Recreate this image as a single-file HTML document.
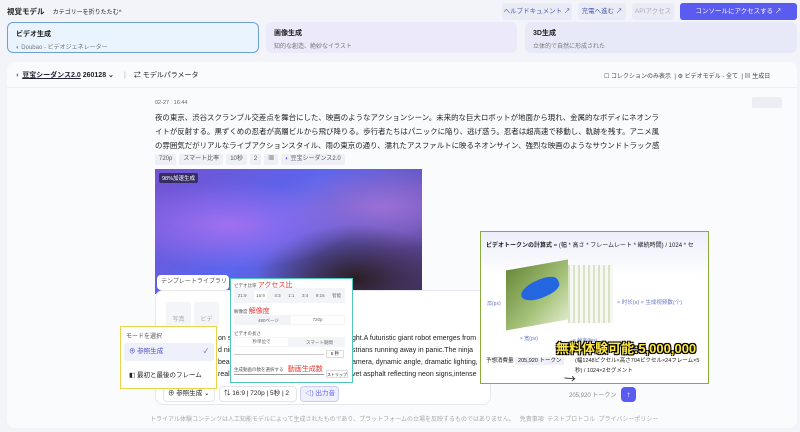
<!DOCTYPE html>
<html><head><meta charset="utf-8"><style>
*{box-sizing:border-box;margin:0;padding:0}
body{width:800px;height:432px;overflow:hidden;background:#f3f4f9;font-family:"Liberation Sans","Noto Sans CJK JP",sans-serif;color:#222;position:relative;font-size:7px}
.a{position:absolute;white-space:nowrap}
.btn{position:absolute;top:3px;height:17px;border-radius:3px;background:#e9ebf5;color:#4b5bb0;font-size:6.5px;line-height:17px;text-align:center}
.card{position:absolute;top:22px;height:31px;border-radius:6px;padding:6px 8px;font-size:7px;font-weight:bold;color:#222}
.card span{display:block;font-weight:normal;font-size:6px;color:#777;margin-top:3px}
.tag{display:inline-block;background:#eef0f5;color:#555;font-size:6px;padding:0 4px;height:11px;line-height:11px;margin-right:3px;border-radius:2px}
.txt{font-size:7.45px;line-height:14px;color:#222;white-space:normal}
.en{font-size:7px;color:#222}
</style></head><body>
<div class="a" style="left:7px;top:6px;font-size:7.5px;font-weight:bold">視覚モデル <span style="font-weight:normal;font-size:6px;margin-left:6px">カテゴリーを折りたたむ^</span></div>
<div class="btn" style="left:502px;width:70px">ヘルプドキュメント ↗</div>
<div class="btn" style="left:578px;width:48px">充電へ進む ↗</div>
<div class="btn" style="left:632px;width:42px;color:#aab">APIアクセス</div>
<div class="btn" style="left:680px;width:117px;background:#5a5bf0;color:#fff">コンソールにアクセスする ↗</div>
<div class="card" style="left:7px;width:252px;background:#eaf4fe;border:1px solid #6b9fd6">ビデオ生成<span><b style="color:#4a7cf0">◐</b> Doubao - ビデオジェネレーター</span></div>
<div class="card" style="left:266px;width:251px;background:#ebe9fa">画像生成<span>知的な創造、絶妙なイラスト</span></div>
<div class="card" style="left:525px;width:272px;background:#e7e9f9">3D生成<span>立体的で自然に形成された</span></div>
<div class="a" style="left:7px;top:62px;width:790px;height:366px;background:#fafbfd;border-radius:8px"></div>
<div class="a" style="left:16px;top:70px;font-size:7px;font-weight:bold"><span style="color:#6b5ff0">◐</span> <u style="color:#223">豆宝シーダンス2.0</u> 260128 ⌄ <span style="color:#ccc;margin:0 8px">|</span><span style="font-weight:normal">⇄ モデルパラメータ</span></div>
<div class="a" style="left:604px;top:71px;font-size:6px;color:#444">☐ コレクションのみ表示 &nbsp;| ⚙ ビデオモデル - 全て &nbsp;| ▤ 生成日</div>
<div class="a" style="left:7px;top:87px;width:790px;height:1px;background:#eceef3"></div>
<div class="a" style="left:752px;top:97px;width:30px;height:11px;background:#eceef3;border-radius:2px"></div>
<div class="a" style="left:155px;top:100px;font-size:5.5px;color:#666">02-27 &nbsp; 16:44</div>
<div class="a" style="left:155px;top:111px;font-size:7.45px;line-height:14px">夜の東京、渋谷スクランブル交差点を舞台にした、映画のようなアクションシーン。未来的な巨大ロボットが地面から現れ、金属的なボディにネオンラ<br>イトが反射する。黒ずくめの忍者が高層ビルから飛び降りる。歩行者たちはパニックに陥り、逃げ惑う。忍者は超高速で移動し、軌跡を残す。アニメ風<br>の雰囲気だがリアルなライブアクションスタイル、雨の東京の通り、濡れたアスファルトに映るネオンサイン、強烈な映画のようなサウンドトラック感</div>
<div class="a" style="left:155px;top:154px"><span class="tag">720p</span><span class="tag">スマート比率</span><span class="tag">10秒</span><span class="tag">2</span><span class="tag">▦</span><span class="tag"><b style="color:#6b5ff0">◐</b> 豆宝シーダンス2.0</span></div>
<div class="a" style="left:155px;top:169px;width:267px;height:125px;background:radial-gradient(ellipse at 28% 45%,#a070f0 0,transparent 45%),radial-gradient(ellipse at 75% 88%,#2a1e22 0,transparent 35%),radial-gradient(ellipse at 85% 30%,#9a70d6 0,transparent 35%),linear-gradient(135deg,#7452d0,#5a66ee 45%,#6450b0 80%,#4a3a78)"></div>
<div class="a" style="left:159px;top:173px;background:rgba(30,30,50,.7);color:#fff;font-size:5.5px;padding:1px 3px;border-radius:2px">98%加速生成</div>
<div class="a" style="left:155px;top:290px;width:336px;height:115px;background:#fff;border:1px solid #e6e8ee;border-radius:8px"></div>
<div class="a" style="left:157px;top:275px;width:72px;height:15px;background:#fff;border-radius:4px;font-size:6px;color:#555;line-height:15px;padding-left:4px">テンプレートライブラリ</div>
<div class="a" style="left:166px;top:302px;width:25px;height:26px;background:#f4f5f8;border-radius:3px;font-size:6px;color:#aaa;text-align:center;padding-top:12px">写真</div>
<div class="a" style="left:194px;top:302px;width:25px;height:26px;background:#f4f5f8;border-radius:3px;font-size:6px;color:#aaa;text-align:center;padding-top:12px">ビデ</div>
<div class="a en" style="left:218px;top:335px">on sc</div><div class="a en" style="left:352px;top:335px">ght.A futuristic giant robot emerges from</div>
<div class="a en" style="left:218px;top:347px">d nin</div><div class="a en" style="left:352px;top:347px">strians running away in panic.The ninja</div>
<div class="a en" style="left:218px;top:359px">bean</div><div class="a en" style="left:352px;top:359px">amera, dynamic angle, dramatic lighting,</div>
<div class="a en" style="left:218px;top:371px">realis</div><div class="a en" style="left:352px;top:371px">vet asphalt reflecting neon signs,intense</div>
<div class="a" style="left:163px;top:386px;width:52px;height:16px;border:1px solid #e3e5ea;border-radius:4px;font-size:6.5px;line-height:14px;padding-left:4px">⊕ 参照生成 ⌄</div>
<div class="a" style="left:219px;top:386px;width:78px;height:16px;border:1px solid #e3e5ea;border-radius:4px;font-size:6.5px;line-height:14px;padding-left:4px">⇅ 16:9 | 720p | 5秒 | 2</div>
<div class="a" style="left:300px;top:386px;width:39px;height:16px;border:1px solid #c9cdf5;background:#eef0fd;color:#5a5bf0;border-radius:4px;font-size:6.5px;line-height:14px;padding-left:4px">◁) 出力音</div>
<div class="a" style="left:569px;top:390px;font-size:6px;color:#888">205,920 トークン</div>
<div class="a" style="left:621px;top:387px;width:15px;height:15px;background:#5a5bf0;border-radius:4px;color:#fff;font-size:8px;text-align:center;line-height:15px">↑</div>
<div class="a" style="left:150px;top:414px;font-size:6px;color:#aaa">トライアル体験コンテンツは人工知能モデルによって生成されたものであり、プラットフォームの立場を反映するものではありません。 &nbsp;&nbsp;免責事項 &nbsp;テストプロトコル &nbsp;プライバシーポリシー</div>
<!-- mode dropdown -->
<div class="a" style="left:120px;top:326px;width:97px;height:63px;background:#fff;border:1.5px solid #e8d54a"></div>
<div class="a" style="left:126px;top:331px;font-size:6px;color:#555">モードを選択</div>
<div class="a" style="left:124px;top:343px;width:90px;height:18px;background:#eef0fb;border-radius:3px;font-size:6.5px;line-height:18px;padding-left:5px;color:#4b4fc0">⊕ 参照生成<span style="float:right;margin-right:6px">✓</span></div>
<div class="a" style="left:129px;top:369px;font-size:6.5px">◧ 最初と最後のフレーム</div>
<!-- settings popup -->
<div class="a" style="left:230px;top:278px;width:123px;height:105px;background:#fff;border:1.5px solid #4fc6b8"></div>
<div class="a" style="left:234px;top:280px;font-size:4.5px;color:#555">ビデオ比率 <span style="color:#e33;font-size:7px">アクセス比</span></div>
<div class="a" style="left:234px;top:288px;width:111px;height:15px;background:#f3f4f7;font-size:4.5px;color:#666;display:flex;justify-content:space-around;align-items:center"><span>21:9</span><span style="background:#fff;padding:2px">16:9</span><span>4:3</span><span>1:1</span><span>3:4</span><span>9:16</span><span>智能</span></div>
<div class="a" style="left:234px;top:306px;font-size:4.5px;color:#555">解像度 <span style="color:#e33;font-size:7px">解像度</span></div>
<div class="a" style="left:234px;top:315px;width:111px;height:10px;background:#f3f4f7;font-size:4.5px;color:#666"><span style="position:absolute;left:24px;top:3px">480ページ</span><span style="position:absolute;left:57px;top:1px;width:53px;height:8px;background:#fff;text-align:center;line-height:8px">720p</span></div>
<div class="a" style="left:234px;top:331px;font-size:4.5px;color:#555">ビデオの長さ</div>
<div class="a" style="left:234px;top:337px;width:111px;height:10px;background:#f3f4f7;font-size:4.5px;color:#666"><span style="position:absolute;left:1px;top:1px;width:53px;height:8px;background:#fff;text-align:center;line-height:8px">秒単位で</span><span style="position:absolute;left:72px;top:3px">スマート期間</span></div>
<div class="a" style="left:234px;top:354px;width:90px;height:1px;background:#ccc"></div>
<div class="a" style="left:326px;top:350px;width:18px;height:8px;border:1px solid #ddd;font-size:4.5px;text-align:center">5 秒</div>
<div class="a" style="left:234px;top:364px;font-size:4.5px;color:#555">生成動画の数を選択する <span style="color:#e33;font-size:7px;margin-left:3px">動画生成数</span></div>
<div class="a" style="left:234px;top:374px;width:90px;height:1px;background:#999"></div>
<div class="a" style="left:326px;top:370px;width:22px;height:8px;border:1px solid #ddd;font-size:4px;text-align:center;line-height:7px">ストリップ</div>
<!-- token popup -->
<div class="a" style="left:480px;top:231px;width:229px;height:153px;background:linear-gradient(#eceefb,#fff 30%);border:1.5px solid #8aab3a"></div>
<div class="a" style="left:486px;top:240px;font-size:6px;width:220px;overflow:hidden"><b>ビデオトークンの計算式</b> = (幅 * 高さ * フレームレート * 継続時間) / 1024 * セ</div>
<div class="a" style="left:506px;top:265px;width:62px;height:60px;background:linear-gradient(135deg,#6a8a3a,#a5c27a 60%,#dfe8c8);transform:skewY(-10deg)"></div>
<div class="a" style="left:520px;top:280px;width:40px;height:18px;background:#2466e0;border-radius:50% 50% 40% 60%;transform:rotate(-25deg)"></div>
<div class="a" style="left:568px;top:265px;width:45px;height:58px;background:repeating-linear-gradient(90deg,#cfdcb8 0 2px,#f4f7ee 2px 5px);opacity:.8"></div>
<div class="a" style="left:487px;top:300px;font-size:5px;color:#6b78c8">高(px)</div>
<div class="a" style="left:617px;top:298px;font-size:5.5px;color:#6b78c8">× 时长(s) × 生成视频数(个)</div>
<div class="a" style="left:520px;top:335px;font-size:5px;color:#6b78c8">× 宽(px)</div>
<div class="a" style="left:573px;top:337px;font-size:5px;color:#6b78c8">× 帧率(fps)</div>
<div class="a" style="left:556px;top:338px;font-size:13px;font-weight:bold;color:#ffe94a;text-shadow:0 0 2px #000,1px 1px 0 #000,-1px -1px 0 #000,1px -1px 0 #000,-1px 1px 0 #000">無料体験可能:5,000,000</div>
<div class="a" style="left:486px;top:356px;font-size:5.5px">予想消費量 <span style="background:#eef0f5;padding:1px 3px">205,920 トークン</span></div>
<div class="a" style="left:575px;top:356px;font-size:5.5px;line-height:10px;width:130px;white-space:normal">(幅1248ピクセル×高さ704ピクセル×24フレーム×5秒) / 1024×2セグメント</div>
<div class="a" style="left:564px;top:370px;font-size:12px;transform:rotate(-40deg)">↘</div>
</body></html>
